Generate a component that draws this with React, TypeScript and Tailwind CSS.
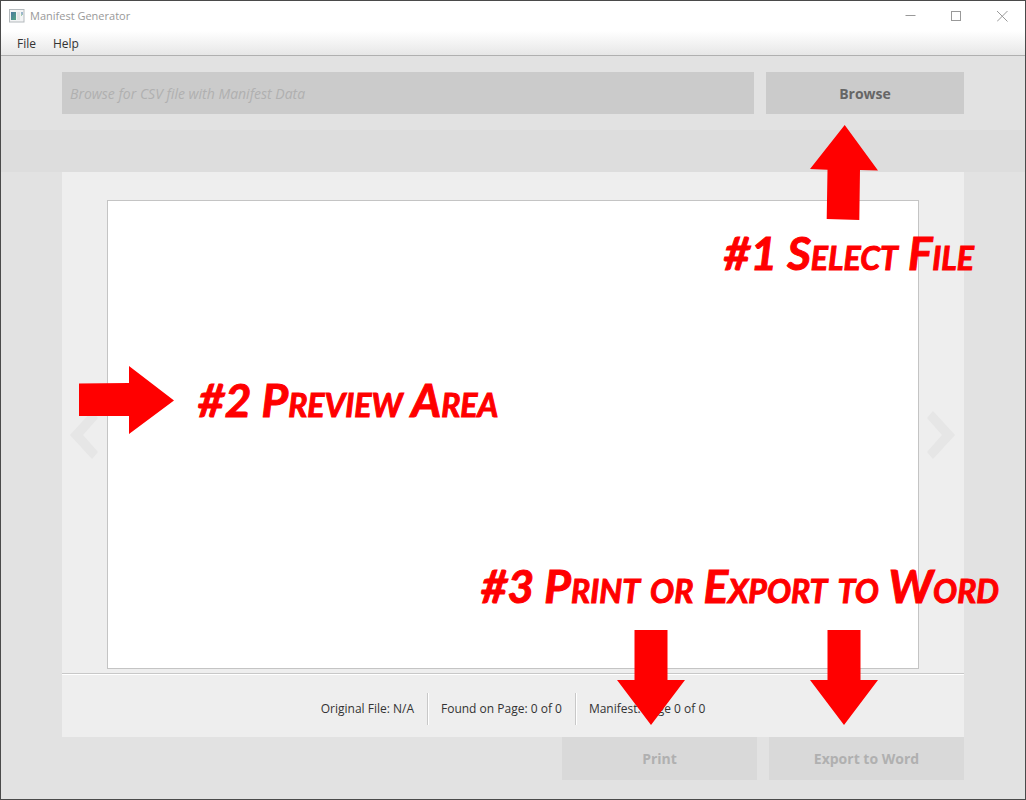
import React from "react";

type ArrowProps = { points: string; width: number; height: number; className: string };

function Arrow({ points, width, height, className }: ArrowProps) {
  return (
    <svg
      aria-hidden="true"
      className={"pointer-events-none absolute " + className}
      width={width}
      height={height}
      viewBox={`0 0 ${width} ${height}`}
    >
      <polygon points={points} fill="#ff0000" />
    </svg>
  );
}

function Callout({ children, className }: { children: React.ReactNode; className: string }) {
  return (
    <p
      className={
        "pointer-events-none absolute whitespace-nowrap font-['Lato',sans-serif] text-[46px] leading-[56px] font-bold italic text-[#ff0000] [-webkit-text-stroke:1px_#ff0000] [font-variant-caps:small-caps] " +
        className
      }
    >
      {children}
    </p>
  );
}

function AppIcon() {
  return (
    <svg aria-hidden="true" width="16" height="14" viewBox="0 0 16 14">
      <defs>
        <linearGradient id="pane" x1="0" y1="0" x2="1" y2="1">
          <stop offset="0" stopColor="#4a78a0" />
          <stop offset="1" stopColor="#55a583" />
        </linearGradient>
      </defs>
      <rect x="0.5" y="0.5" width="14.5" height="12.5" fill="#f3f4f5" stroke="#b4babd" />
      <rect x="2" y="3" width="5" height="8" fill="url(#pane)" />
      <rect x="8" y="3" width="3" height="8" fill="#e3e5e6" />
      <rect x="12" y="3" width="2" height="3" fill="#9bb6cc" />
      <rect x="12" y="5" width="1" height="2" fill="#a4cdb0" />
    </svg>
  );
}

function TitleBar() {
  const control = "flex h-[29px] w-[46px] items-center justify-center";
  return (
    <header className="flex h-[30px] items-center bg-white pl-2 text-[#999999]">
      <AppIcon />
      <h1 className="ml-[5px] flex-1 text-[11px] leading-4">Manifest Generator</h1>
      <button aria-label="Minimize" className={control}>
        <svg width="11" height="11" viewBox="0 0 11 11"><path d="M0.5 4.5H10.5" stroke="#999999" /></svg>
      </button>
      <button aria-label="Maximize" className={control}>
        <svg width="11" height="11" viewBox="0 0 11 11"><rect x="0.5" y="0.5" width="9" height="9" fill="none" stroke="#999999" /></svg>
      </button>
      <button aria-label="Close" className={control}>
        <svg width="11" height="11" viewBox="0 0 11 11"><path d="M0 0L10.5 10.5M10.5 0L0 10.5" stroke="#999999" /></svg>
      </button>
    </header>
  );
}

export default function App() {
  return (
    <div className="relative flex min-h-screen flex-col overflow-hidden border border-[#4a4a4a] bg-[#e2e2e2] font-['Open_Sans','Noto_Sans',sans-serif] text-[#333333]">
      <TitleBar />
      <nav className="flex h-[25px] items-center border-b border-[#b0b0b0] bg-linear-to-b from-white to-[#e7e7e7] pt-[2px] pl-4 text-[12px] leading-4">
        <button className="mr-[17px]">File</button>
        <button>Help</button>
      </nav>

      <form className="flex gap-3 px-[61px] py-4" onSubmit={(e) => e.preventDefault()}>
        <input
          aria-label="Manifest data file"
          type="text"
          readOnly
          placeholder="Browse for CSV file with Manifest Data"
          className="h-[42px] min-w-0 flex-1 bg-[#cbcbcb] px-2 text-[14px] italic outline-none placeholder:text-[#b0b0b0]"
        />
        <button type="button" className="h-[42px] w-[198px] bg-[#cbcbcb] text-[14px] font-bold text-[#666666]">
          Browse
        </button>
      </form>
      <div className="h-[42px] bg-[#dddddd]" />

      <main className="mx-[61px] flex flex-1 flex-col bg-[#eeeeee]">
        <div className="flex flex-1 pt-7 pb-1">
          <button aria-label="Previous page" className="flex w-[45px] items-center pl-2">
            <svg width="28" height="48" viewBox="0 0 28 48"><polygon points="0,24 22,0 28,7 13,24 28,41 22,48" fill="#e6e6e6" /></svg>
          </button>
          <section aria-label="Preview" className="flex-1 border border-[#c4c4c4] bg-white" />
          <button aria-label="Next page" className="flex w-[45px] items-center pl-2">
            <svg width="28" height="48" viewBox="0 0 28 48"><polygon points="28,24 6,0 0,7 15,24 0,41 6,48" fill="#e6e6e6" /></svg>
          </button>
        </div>
        <div className="flex h-[64px] items-center justify-center border-t border-[#c8c8c8] pt-[7px] text-[12px] leading-8 shadow-[inset_0_1px_0_#ffffff]">
          <p className="pr-[13px]">Original File: N/A</p>
          <p className="border-l border-[#c8c8c8] px-[13px] shadow-[inset_1px_0_0_#ffffff]">Found on Page: 0 of 0</p>
          <p className="border-l border-[#c8c8c8] pl-[13px] shadow-[inset_1px_0_0_#ffffff]">Manifest: Page 0 of 0</p>
        </div>
      </main>

      <footer className="flex justify-end gap-3 px-[61px] pb-[19px] text-[14px] font-bold text-[#b0b0b0]">
        <button disabled className="h-[43px] w-[195px] bg-[#d9d9d9]">Print</button>
        <button disabled className="h-[43px] w-[195px] bg-[#d9d9d9]">Export to Word</button>
      </footer>

      <Arrow className="top-[124px] right-[147px]" width={68} height={95} points="34.7,0 68,45.5 50,45 49.3,95 16.7,94 17.5,44.7 0,44" />
      <Callout className="top-[224px] right-[51px]">#1 Select File</Callout>
      <Arrow className="top-[365px] left-[78px]" width={95} height={68} points="0,17.5 50,17 50,0 95,34.5 50,68 50,50 0,50" />
      <Callout className="top-[371px] left-[197px]">#2 Preview Area</Callout>
      <Callout className="right-[26px] bottom-[185px]">#3 Print or Export to Word</Callout>
      <Arrow className="right-[340px] bottom-[74px]" width={68} height={95} points="17.5,0 50.5,0 50.5,50 68,50 34,95 0,50 17.5,50" />
      <Arrow className="right-[147px] bottom-[74px]" width={68} height={95} points="17.5,0 50.5,0 50.5,50 68,50 34,95 0,50 17.5,50" />
    </div>
  );
}
